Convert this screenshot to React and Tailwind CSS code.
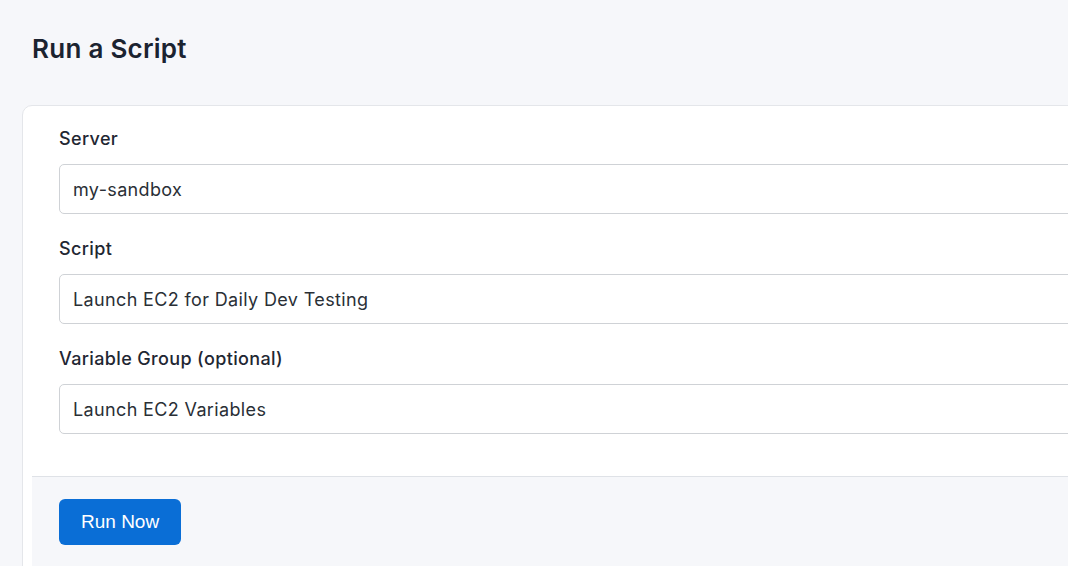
import { useState } from "react";

const Field = ({ label, value, onChange }) => (
  <div className="flex flex-col">
    <label className="mb-[13px] text-[18px] font-medium leading-[24px] tracking-[0.02em] text-[#1f2733]">
      {label}
    </label>
    <input
      value={value}
      onChange={(e) => onChange(e.target.value)}
      className="h-[50px] w-full rounded-[5px] border border-[#cfd2d6] bg-white px-[13px] text-[18px] tracking-[0.02em] text-[#2a2f36] outline-none"
    />
  </div>
);

const App = () => {
  const [server, setServer] = useState("my-sandbox");
  const [script, setScript] = useState("Launch EC2 for Daily Dev Testing");
  const [group, setGroup] = useState("Launch EC2 Variables");

  return (
    <div
      className="h-[566px] overflow-hidden bg-[#f6f7fa]"
      style={{ fontFamily: "Inter, 'Noto Sans', sans-serif" }}
    >
      <h1 className="pl-[32px] pt-[32px] text-[26px] font-semibold leading-[34px] tracking-[0.01em] text-[#1b2330]">
        Run a Script
      </h1>

      <div className="ml-[22px] mt-[39px] w-[1080px] rounded-[10px] border border-[#e4e6ea] bg-white pl-[9px]">
        <div className="flex flex-col gap-[23px] pl-[27px] pr-[20px] pt-[21px] pb-[42px]">
          <Field label="Server" value={server} onChange={setServer} />
          <Field label="Script" value={script} onChange={setScript} />
          <Field label="Variable Group (optional)" value={group} onChange={setGroup} />
        </div>
        <div className="rounded-bl-[10px] border-t border-[#dfe2e7] bg-[#f6f7fa] pl-[27px] pt-[22px] pb-[30px]">
          <button
            className="h-[46px] rounded-[6px] bg-[#0a6ed6] px-[22px] text-[19px] text-white"
            style={{ fontFamily: "'Liberation Sans', Arial, sans-serif" }}
          >
            Run Now
          </button>
        </div>
      </div>
    </div>
  );
};

export default App;
